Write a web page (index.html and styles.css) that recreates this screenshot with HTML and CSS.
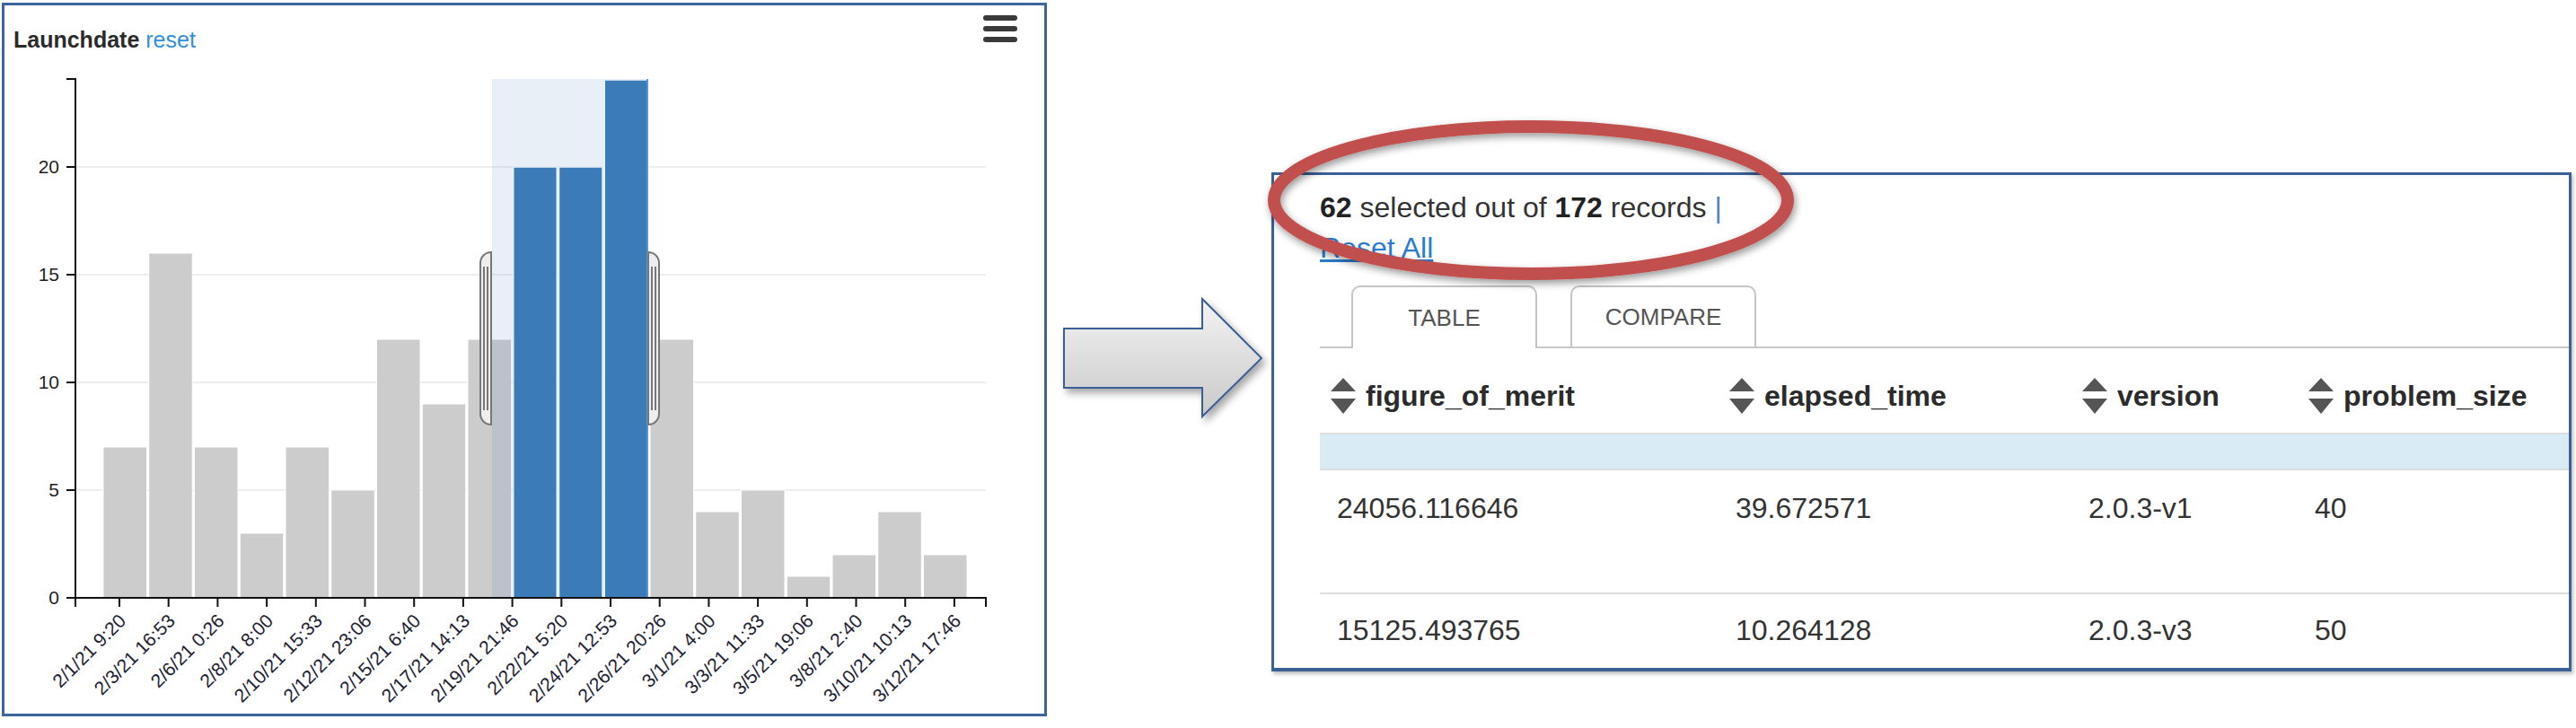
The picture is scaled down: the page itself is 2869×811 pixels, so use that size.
FILE: index.html
```html
<!DOCTYPE html>
<html>
<head>
<meta charset="utf-8">
<title>Launchdate brush to table</title>
<link rel="stylesheet" href="styles.css">
</head>
<body>
<div class="slide">
  <section class="chart-panel">
    <div class="chart-head">
      <div class="chart-title"><strong>Launchdate</strong> <a class="reset" href="#">reset</a></div>
      <svg class="menu-icon" width="38" height="30" viewBox="0 0 38 30">
        <rect x="0" y="0" width="38" height="6" rx="3" fill="#3a3a3a"/>
        <rect x="0" y="12" width="38" height="6" rx="3" fill="#3a3a3a"/>
        <rect x="0" y="24" width="38" height="6" rx="3" fill="#3a3a3a"/>
      </svg>
    </div>
    <svg class="chart" width="1158" height="735" viewBox="5 60 1158 735">
      <g stroke="#eeeeee" stroke-width="2">
        <line x1="84" y1="186" x2="1098" y2="186"/>
        <line x1="84" y1="306" x2="1098" y2="306"/>
        <line x1="84" y1="426" x2="1098" y2="426"/>
        <line x1="84" y1="546" x2="1098" y2="546"/>
      </g>
      <g fill="#cccccc" stroke="#ffffff" stroke-width="1">
        <rect x="115" y="498" width="48.5" height="168"/>
        <rect x="165.75" y="282" width="48.5" height="384"/>
        <rect x="216.5" y="498" width="48.5" height="168"/>
        <rect x="267.25" y="594" width="48.5" height="72"/>
        <rect x="318" y="498" width="48.5" height="168"/>
        <rect x="368.75" y="546" width="48.5" height="120"/>
        <rect x="419.5" y="378" width="48.5" height="288"/>
        <rect x="470.25" y="450" width="48.5" height="216"/>
        <rect x="521" y="378" width="48.5" height="288"/>
        <rect x="724" y="378" width="48.5" height="288"/>
        <rect x="774.75" y="570" width="48.5" height="96"/>
        <rect x="825.5" y="546" width="48.5" height="120"/>
        <rect x="876.25" y="642" width="48.5" height="24"/>
        <rect x="927" y="618" width="48.5" height="48"/>
        <rect x="977.75" y="570" width="48.5" height="96"/>
        <rect x="1028.5" y="618" width="48.5" height="48"/>
      </g>
      <g fill="#387bb9" stroke="#ffffff" stroke-width="1.5">
        <rect x="571.75" y="186" width="48.5" height="480"/>
        <rect x="622.5" y="186" width="48.5" height="480"/>
        <rect x="673.25" y="89" width="48.5" height="577"/>
      </g>
      <rect x="548" y="88" width="173" height="578" fill="#4682b4" fill-opacity="0.125"/>
      <line x1="721" y1="88" x2="721" y2="666" stroke="#5b95cf" stroke-width="2"/>
      <g fill="#eeeeee" stroke="#777777" stroke-width="2">
        <path d="M547,281 A12,12 0 0 0 535,293 V461 A12,12 0 0 0 547,473 Z M543,297 V457 M539,297 V457"/>
        <path d="M722,281 A12,12 0 0 1 734,293 V461 A12,12 0 0 1 722,473 Z M726,297 V457 M730,297 V457"/>
      </g>
      <g fill="none" stroke="#111111" stroke-width="2">
        <path d="M74,88 H84 V666 H74"/>
        <path d="M84,676 V666 H1098 V676"/>
        <path d="M74,186 H84 M74,306 H84 M74,426 H84 M74,546 H84"/>
        <path d="M133,666 V676 M187.7,666 V676 M242.4,666 V676 M297.1,666 V676 M351.8,666 V676 M406.5,666 V676 M461.2,666 V676 M515.9,666 V676 M570.6,666 V676 M625.3,666 V676 M680,666 V676 M734.7,666 V676 M789.4,666 V676 M844.1,666 V676 M898.8,666 V676 M953.5,666 V676 M1008.2,666 V676 M1062.9,666 V676"/>
      </g>
      <g class="ylab" text-anchor="end">
        <text x="66" y="193">20</text>
        <text x="66" y="313">15</text>
        <text x="66" y="433">10</text>
        <text x="66" y="553">5</text>
        <text x="66" y="673">0</text>
      </g>
      <g class="xlab" text-anchor="end">
        <text transform="translate(141.5,693) rotate(-45)">2/1/21 9:20</text>
        <text transform="translate(196.2,693) rotate(-45)">2/3/21 16:53</text>
        <text transform="translate(250.9,693) rotate(-45)">2/6/21 0:26</text>
        <text transform="translate(305.6,693) rotate(-45)">2/8/21 8:00</text>
        <text transform="translate(360.3,693) rotate(-45)">2/10/21 15:33</text>
        <text transform="translate(415,693) rotate(-45)">2/12/21 23:06</text>
        <text transform="translate(469.7,693) rotate(-45)">2/15/21 6:40</text>
        <text transform="translate(524.4,693) rotate(-45)">2/17/21 14:13</text>
        <text transform="translate(579.1,693) rotate(-45)">2/19/21 21:46</text>
        <text transform="translate(633.8,693) rotate(-45)">2/22/21 5:20</text>
        <text transform="translate(688.5,693) rotate(-45)">2/24/21 12:53</text>
        <text transform="translate(743.2,693) rotate(-45)">2/26/21 20:26</text>
        <text transform="translate(797.9,693) rotate(-45)">3/1/21 4:00</text>
        <text transform="translate(852.6,693) rotate(-45)">3/3/21 11:33</text>
        <text transform="translate(907.3,693) rotate(-45)">3/5/21 19:06</text>
        <text transform="translate(962,693) rotate(-45)">3/8/21 2:40</text>
        <text transform="translate(1016.7,693) rotate(-45)">3/10/21 10:13</text>
        <text transform="translate(1071.4,693) rotate(-45)">3/12/21 17:46</text>
      </g>
    </svg>
  </section>

  <div class="arrow-col">
    <svg width="250" height="500" viewBox="1166 0 250 500">
      <defs>
        <linearGradient id="arrowFill" gradientUnits="userSpaceOnUse" x1="0" y1="333" x2="0" y2="464">
          <stop offset="0" stop-color="#f3f3f3"/>
          <stop offset="1" stop-color="#c9c9c9"/>
        </linearGradient>
        <filter id="arrowShadow" x="-20%" y="-30%" width="150%" height="170%">
          <feDropShadow dx="4" dy="5" stdDeviation="4" flood-color="#000" flood-opacity="0.35"/>
        </filter>
      </defs>
      <polygon points="1185,366 1339,366 1339,333 1405,399 1339,464 1339,432 1185,432" fill="url(#arrowFill)" stroke="#3a5f94" stroke-width="2" stroke-linejoin="miter" filter="url(#arrowShadow)"/>
    </svg>
  </div>

  <section class="table-panel">
    <div class="count"><strong>62</strong> selected out of <strong>172</strong> records <span class="bar">|</span>
      <a class="reset-all" href="#">Reset All</a>
    </div>
    <div class="tabs">
      <div class="tab active">TABLE</div>
      <div class="tab">COMPARE</div>
    </div>
    <div class="grid">
      <div class="th"><svg class="sort" width="28" height="40" viewBox="0 0 28 40"><path d="M14 0 L28 15 L0 15 Z M0 23 L28 23 L14 40 Z" fill="#555"/></svg>figure_of_merit</div>
      <div class="th"><svg class="sort" width="28" height="40" viewBox="0 0 28 40"><path d="M14 0 L28 15 L0 15 Z M0 23 L28 23 L14 40 Z" fill="#555"/></svg>elapsed_time</div>
      <div class="th"><svg class="sort" width="28" height="40" viewBox="0 0 28 40"><path d="M14 0 L28 15 L0 15 Z M0 23 L28 23 L14 40 Z" fill="#555"/></svg>version</div>
      <div class="th"><svg class="sort" width="28" height="40" viewBox="0 0 28 40"><path d="M14 0 L28 15 L0 15 Z M0 23 L28 23 L14 40 Z" fill="#555"/></svg>problem_size</div>
      <div class="group-row"></div>
      <div class="td first">24056.116646</div>
      <div class="td first">39.672571</div>
      <div class="td first">2.0.3-v1</div>
      <div class="td first">40</div>
      <div class="td">15125.493765</div>
      <div class="td">10.264128</div>
      <div class="td">2.0.3-v3</div>
      <div class="td">50</div>
    </div>
  </section>

  <svg class="annotation" width="2869" height="811" viewBox="0 0 2869 811">
    <defs>
      <filter id="ovalShadow" x="-10%" y="-30%" width="120%" height="160%">
        <feDropShadow dx="2" dy="4" stdDeviation="4" flood-color="#000" flood-opacity="0.4"/>
      </filter>
    </defs>
    <ellipse cx="1705" cy="223" rx="286" ry="82" fill="none" stroke="#c0504d" stroke-width="14" filter="url(#ovalShadow)"/>
  </svg>
</div>
</body>
</html>
```

FILE: styles.css
```css
html, body {
  margin: 0;
  padding: 0;
  background: #ffffff;
}

body {
  font-family: "Liberation Sans", Arial, sans-serif;
  color: #333333;
}

.slide {
  position: relative;
  display: flex;
  align-items: flex-start;
  width: 2869px;
  height: 811px;
  overflow: hidden;
  background: #ffffff;
}

/* ---------- left chart panel ---------- */
.chart-panel {
  flex: none;
  margin: 3px 0 0 2px;
  width: 1164px;
  height: 795px;
  box-sizing: border-box;
  border: 3px solid #3c659b;
  display: flex;
  flex-direction: column;
  background: #ffffff;
}

.chart-head {
  height: 54px;
  display: flex;
  justify-content: space-between;
  align-items: flex-start;
  padding: 0 30px 0 10px;
}

.chart-title {
  margin-top: 23px;
  font-size: 25px;
  line-height: 30px;
  color: #333333;
}

.chart-title strong {
  font-weight: bold;
  color: #2b2b2b;
}

.reset {
  color: #3090d8;
  text-decoration: none;
}

.menu-icon {
  display: block;
  margin-top: 11px;
}

.chart {
  display: block;
}

.ylab text {
  font-family: "Liberation Sans", Arial, sans-serif;
  font-size: 21px;
  fill: #1f1f1f;
}

.xlab text {
  font-family: "Liberation Sans", Arial, sans-serif;
  font-size: 21px;
  fill: #222233;
}

/* ---------- arrow ---------- */
.arrow-col {
  flex: none;
  width: 250px;
}

.arrow-col svg {
  display: block;
}

/* ---------- right table panel ---------- */
.table-panel {
  flex: none;
  margin-top: 192px;
  width: 1448px;
  height: 556px;
  box-sizing: border-box;
  border: 3px solid #3b6096;
  border-bottom-width: 4px;
  box-shadow: 2px 3px 4px rgba(0, 0, 0, 0.25);
  padding: 14px 0 0 51px;
  overflow: hidden;
  background: #ffffff;
}

.count {
  font-size: 32px;
  line-height: 45px;
  color: #333333;
  white-space: nowrap;
}

.count strong {
  color: #222222;
}

.count .bar {
  color: #4d86c0;
}

.reset-all {
  display: block;
  width: max-content;
  color: #2a7ccf;
  text-decoration: underline;
}

.tabs {
  margin-top: 19px;
  height: 68px;
  display: flex;
  align-items: flex-end;
  gap: 37px;
  padding-left: 35px;
  border-bottom: 2px solid #c8c8c8;
}

.tab {
  flex: none;
  width: 207px;
  height: 68px;
  box-sizing: border-box;
  border: 2px solid #c4c4c4;
  border-bottom: none;
  border-radius: 10px 10px 0 0;
  display: flex;
  align-items: center;
  justify-content: center;
  font-size: 26px;
  color: #555555;
  background: #ffffff;
}

.tab.active {
  height: 70px;
  margin-bottom: -2px;
}

.grid {
  display: grid;
  grid-template-columns: 444px 393px 252px 400px;
}

.th {
  height: 94px;
  box-sizing: border-box;
  padding: 33px 0 21px 12px;
  display: flex;
  align-items: center;
  gap: 11px;
  font-size: 32px;
  line-height: 40px;
  font-weight: bold;
  color: #2b2b2b;
  white-space: nowrap;
}

.sort {
  flex: none;
  display: block;
}

.group-row {
  grid-column: 1 / -1;
  height: 38px;
  background: #d9ebf5;
  border-top: 2px solid #dddddd;
  border-bottom: 2px solid #dddddd;
}

.td {
  padding: 20px 0 0 19px;
  border-top: 2px solid #dddddd;
  font-size: 32px;
  line-height: 40px;
  color: #333333;
  white-space: nowrap;
}

.td.first {
  border-top: none;
  height: 136px;
  box-sizing: border-box;
  padding-top: 22px;
}

/* ---------- red annotation oval ---------- */
.annotation {
  position: absolute;
  left: 0;
  top: 0;
  pointer-events: none;
}
```
